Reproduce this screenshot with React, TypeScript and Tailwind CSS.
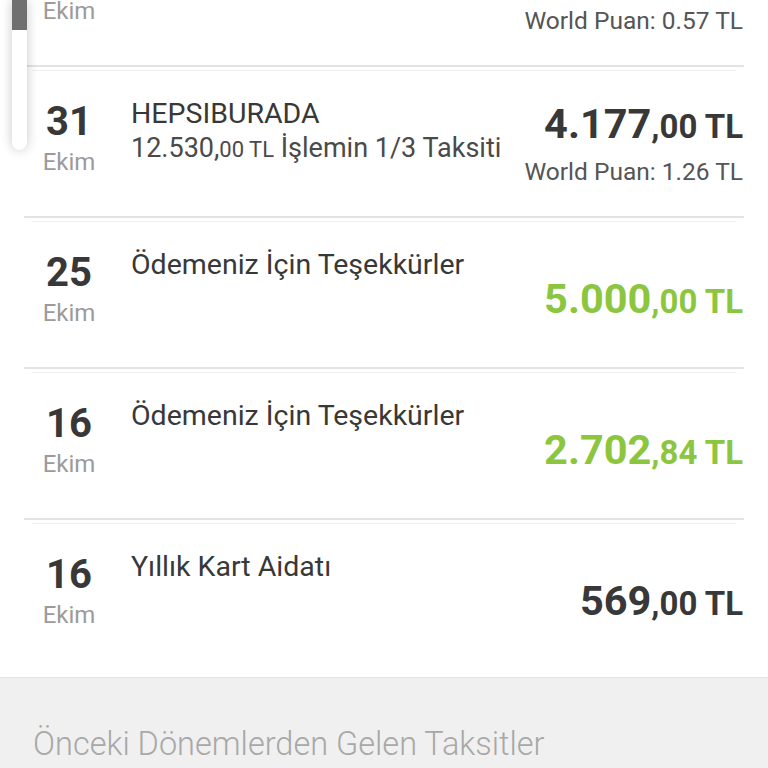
import React from "react";

type Row = {
  day: string;
  title: string;
  sub?: { main: string; small: string; rest: string };
  whole: string;
  cents: string;
  green?: boolean;
  puan?: string;
};

const rows: Row[] = [
  { day: "03", title: "MİGROS", whole: "1.896", cents: "00", puan: "0.57" },
  {
    day: "31",
    title: "HEPSIBURADA",
    sub: { main: "12.530,", small: "00 TL", rest: " İşlemin 1/3 Taksiti" },
    whole: "4.177",
    cents: "00",
    puan: "1.26",
  },
  { day: "25", title: "Ödemeniz İçin Teşekkürler", whole: "5.000", cents: "00", green: true },
  { day: "16", title: "Ödemeniz İçin Teşekkürler", whole: "2.702", cents: "84", green: true },
  { day: "16", title: "Yıllık Kart Aidatı", whole: "569", cents: "00" },
];

function Divider() {
  return (
    <div className="flex flex-col">
      <div className="mx-[24px] h-[2px] bg-[#e3e3e3]" />
      <div className="mx-[32px] mt-[3px] h-[1px] bg-[#efefef]" />
    </div>
  );
}

function Transaction({ row }: { row: Row }) {
  return (
    <div className="flex h-[145px]">
      <div className="flex w-[88px] ml-[25px] flex-col items-center pt-[31px]">
        <span className="text-[40px] font-bold leading-none text-[#383838]">{row.day}</span>
        <span className="mt-[8px] text-[24px] leading-none text-[#9b9b9b]">Ekim</span>
      </div>
      <div className="ml-[18px] flex flex-1 flex-col pt-[29px]">
        <span className="text-[28.5px] leading-none text-[#383838] whitespace-nowrap">{row.title}</span>
        {row.sub && (
          <span className="mt-[6px] text-[27px] leading-none text-[#4a4a4a] whitespace-nowrap">
            {row.sub.main}
            <span className="text-[22px]">{row.sub.small}</span>
            {row.sub.rest}
          </span>
        )}
      </div>
      <div
        className={`mr-[25px] flex flex-col items-end justify-center ${row.puan ? "" : "pt-[9px]"}`}
      >
        <span
          className={`font-bold leading-none whitespace-nowrap ${
            row.green ? "text-[#8cc63f]" : "text-[#383838]"
          }`}
        >
          <span className="text-[41.5px]">{row.whole}</span>
          <span className="text-[33px]">,{row.cents} TL</span>
        </span>
        {row.puan && (
          <span className="mt-[16px] text-[24.5px] leading-none text-[#555555] whitespace-nowrap">
            World Puan: {row.puan} TL
          </span>
        )}
      </div>
    </div>
  );
}

export default function App() {
  return (
    <div
      className="relative h-[768px] w-[768px] overflow-hidden bg-white"
      style={{ fontFamily: "Roboto, 'Noto Sans', sans-serif" }}
    >
      <div className="-mt-[80px] flex flex-col">
        {rows.map((row, i) => (
          <React.Fragment key={i}>
            {i > 0 && <Divider />}
            <Transaction row={row} />
          </React.Fragment>
        ))}
        <div className="h-[8px]" />
        <div className="border-t border-[#e4e4e4] bg-[#f0f0f0] pb-[40px] pl-[33px] pt-[50px]">
          <span className="text-[32.5px] font-light leading-none text-[#a8a8a8] whitespace-nowrap">
            Önceki Dönemlerden Gelen Taksitler
          </span>
        </div>
      </div>

      {/* scroll indicator */}
      <div className="absolute left-[12px] top-0 h-[150px] w-[15px] overflow-hidden rounded-b-full bg-white shadow-[0_0_12px_rgba(0,0,0,0.22)]">
        <div className="h-[30px] w-full bg-[#6f6f6f]" />
      </div>
    </div>
  );
}
